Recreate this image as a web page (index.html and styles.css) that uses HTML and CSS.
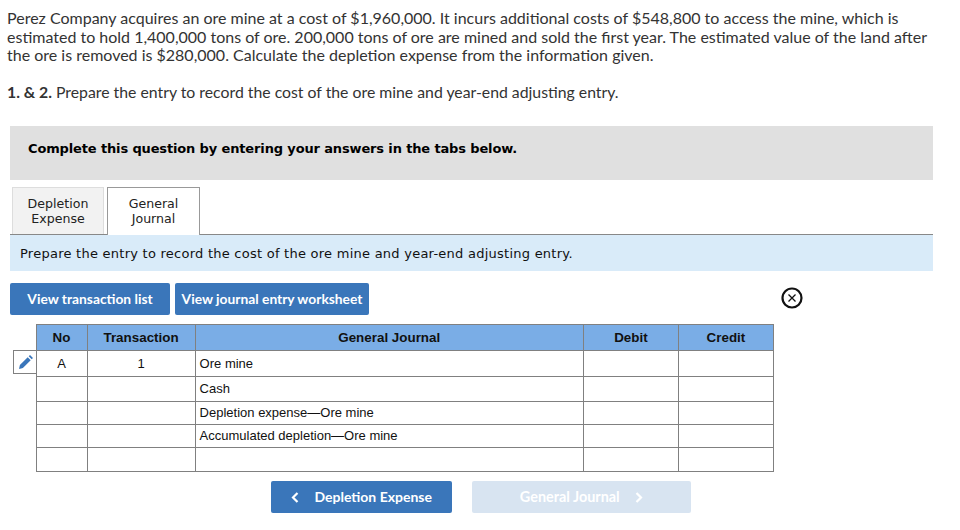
FILE: index.html
```html
<!DOCTYPE html>
<html>
<head>
    <title>Depletion</title>
    <link rel="stylesheet" href="styles.css">
</head>
<body>
    <div class="intro">
        <p class="problem">Perez Company acquires an ore mine at a cost of $1,960,000. It incurs additional costs of $548,800 to access the mine, which is estimated to hold 1,400,000 tons of ore. 200,000 tons of ore are mined and sold the first year. The estimated value of the land after the ore is removed is $280,000. Calculate the depletion expense from the information given.</p>
        <p class="task"><b>1. &amp; 2.</b> Prepare the entry to record the cost of the ore mine and year-end adjusting entry.</p>
    </div>
    <div class="banner">Complete this question by entering your answers in the tabs below.</div>
    <div class="tabs">
        <div class="tab">Depletion<br>Expense</div>
        <div class="tab active">General<br>Journal</div>
    </div>
    <div class="prompt">Prepare the entry to record the cost of the ore mine and year-end adjusting entry.</div>
    <div class="toolbar">
        <button class="btn list-btn">View transaction list</button>
        <button class="btn sheet-btn">View journal entry worksheet</button>
        <svg class="close" width="22" height="22" viewBox="0 0 22 22">
            <circle cx="11" cy="11" r="9.5" fill="none" stroke="#111" stroke-width="2.2"/>
            <path d="M7.5 7.5l7 7M14.5 7.5l-7 7" fill="none" stroke="#111" stroke-width="1.3"/>
        </svg>
    </div>
    <table class="journal">
        <colgroup>
            <col class="c-edit"><col class="c-no"><col class="c-tr"><col class="c-gj"><col class="c-dr"><col class="c-cr">
        </colgroup>
        <tr class="head">
            <td class="blank"></td><th>No</th><th>Transaction</th><th>General Journal</th><th>Debit</th><th>Credit</th>
        </tr>
        <tr class="r1">
            <td class="edit">
                <div class="edit-box">
                    <svg width="14" height="14" viewBox="0 0 14 14"><path d="M0 14l.9-3.9L8.7 2.3l3 3L3.9 13.1zM9.7 1.3L11 0l3 3-1.3 1.3z" fill="#3a76ba"/></svg>
                </div>
            </td>
            <td class="mid">A</td><td class="mid">1</td><td class="acct">Ore mine</td><td></td><td></td>
        </tr>
        <tr class="r2">
            <td class="blank"></td><td></td><td></td><td class="acct">Cash</td><td></td><td></td>
        </tr>
        <tr class="r3">
            <td class="blank"></td><td></td><td></td><td class="acct">Depletion expense—Ore mine</td><td></td><td></td>
        </tr>
        <tr class="r3">
            <td class="blank"></td><td></td><td></td><td class="acct">Accumulated depletion—Ore mine</td><td></td><td></td>
        </tr>
        <tr class="r3 last">
            <td class="blank"></td><td></td><td></td><td class="acct"></td><td></td><td></td>
        </tr>
    </table>
    <div class="pager">
        <button class="btn prev">
            <svg class="chev" width="8" height="11" viewBox="0 0 8 11"><path d="M6.5 1L2 5.5 6.5 10" fill="none" stroke="white" stroke-width="2.2"/></svg>
            Depletion Expense
        </button>
        <button class="btn next">
            General Journal
            <svg class="chev" width="8" height="11" viewBox="0 0 8 11"><path d="M1.5 1L6 5.5 1.5 10" fill="none" stroke="white" stroke-width="2.2"/></svg>
        </button>
    </div>
</body>
</html>
```
FILE: styles.css
```css
body {
    margin: 0;
    font-family: Lato, "Open Sans", sans-serif;
    color: #333;
    background-color: white;
}
.intro {
    width: 925px;
    padding: 9px 0 0 7px;
    font-size: 16px;
    line-height: 18.5px;
}
.intro p {
    margin: 0;
}
.problem {
    margin-bottom: 18px !important;
}
.task {
    font-size: 15.8px;
}
.banner {
    margin: 25px 27px 0 10px;
    height: 54px;
    padding: 14px 18px 0;
    box-sizing: border-box;
    background-color: #e0e0e0;
    color: #000;
    font-family: "DejaVu Sans", sans-serif;
    font-weight: bold;
    font-size: 13px;
    letter-spacing: -0.14px;
    line-height: 17px;
}
.tabs {
    display: flex;
    gap: 3px;
    margin: 7px 27px 0 10px;
    padding-left: 2px;
    height: 48px;
    box-sizing: border-box;
    border-bottom: 1px solid #888;
}
.tab {
    width: 92px;
    height: 47px;
    box-sizing: border-box;
    padding-top: 8px;
    border: 1px solid #ddd;
    border-bottom: none;
    background-color: #f2f2f2;
    color: #222;
    font-family: "DejaVu Sans", sans-serif;
    font-size: 12.6px;
    line-height: 15px;
    text-align: center;
}
.tab.active {
    width: 93px;
    height: 48px;
    border-color: #999;
    background-color: white;
}
.prompt {
    margin: 0 27px 0 10px;
    height: 36px;
    padding-left: 10px;
    box-sizing: border-box;
    background-color: #d9ebf9;
    color: #111;
    font-family: "DejaVu Sans", sans-serif;
    font-size: 13px;
    letter-spacing: 0.25px;
    line-height: 37px;
}
.toolbar {
    display: flex;
    margin: 12px 0 0 10px;
    width: 793px;
}
.btn {
    height: 32px;
    padding: 0 0 2px;
    border: none;
    border-radius: 2px;
    background-color: #3a76ba;
    color: white;
    font-family: Lato, sans-serif;
    font-size: 14px;
    font-weight: bold;
}
.list-btn {
    width: 160px;
    font-size: 13.8px;
}
.sheet-btn {
    width: 194px;
    margin-left: 5px;
    font-size: 13.8px;
}
.close {
    margin: 4px 0 0 auto;
}
.journal {
    margin: 9px 0 0 13px;
    border-collapse: collapse;
    table-layout: fixed;
    width: 761px;
    font-family: "Liberation Sans", Arial, sans-serif;
    font-size: 13px;
    color: #111;
}
.c-edit { width: 23px; }
.c-no { width: 51px; }
.c-tr { width: 108px; }
.c-gj { width: 388px; }
.c-dr { width: 95px; }
.c-cr { width: 95px; }
.journal th,
.journal td {
    border: 1px solid #808080;
    padding: 0;
    box-sizing: border-box;
}
.journal th {
    background-color: #7aade6;
    font-size: 13.4px;
    font-weight: bold;
    text-align: center;
}
.journal td.blank {
    border: none;
    border-right: 1px solid #808080;
}
.head { height: 26px; }
.r1 { height: 26px; }
.r2 { height: 25px; }
.r3 { height: 23px; }
.last { height: 24px; }
.journal td.edit {
    vertical-align: top;
    border-left: none;
    border-bottom: none;
}
.edit-box {
    height: 23px;
    box-sizing: border-box;
    padding: 4px 0 0 5px;
    border-left: 1px solid #808080;
    border-bottom: 1px solid #808080;
}
.edit-box svg {
    display: block;
}
.mid {
    text-align: center;
}
.journal td.acct {
    padding-left: 4px;
}
.r2 .acct,
.r3 .acct {
    padding-bottom: 2px;
}
.pager {
    display: flex;
    gap: 20px;
    margin: 9px 0 0 271px;
}
.prev {
    width: 181px;
}
.next {
    width: 219px;
    background-color: #d8e4f1;
    font-size: 14.4px;
}
.chev {
    vertical-align: -1px;
}
.prev .chev {
    margin-right: 12px;
}
.next .chev {
    margin-left: 12px;
}
```
